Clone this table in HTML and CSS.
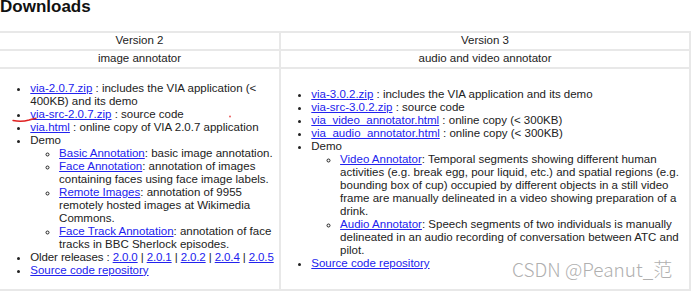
FILE: index.html
```html
<!DOCTYPE html>
<html>
<head>
<meta charset="utf-8">
<link rel="stylesheet" href="styles.css">
</head>
<body>
<div class="page">
  <h2 class="title">Downloads</h2>
  <div class="dl">
    <div class="cell head">Version 2</div>
    <div class="cell head last">Version 3</div>
    <div class="cell head">image annotator</div>
    <div class="cell head last">audio and video annotator</div>
    <div class="cell body">
      <ul>
        <li><a href="#">via-2.0.7.zip</a> : includes the VIA application (&lt; 400KB) and its demo</li>
        <li><a href="#">via-src-2.0.7.zip</a> : source code</li>
        <li><a href="#">via.html</a> : online copy of VIA 2.0.7 application</li>
        <li>Demo
          <ul>
            <li><a href="#">Basic Annotation</a>: basic image annotation.</li>
            <li><a href="#">Face Annotation</a>: annotation of images containing faces using face image labels.</li>
            <li><a href="#">Remote Images</a>: annotation of 9955 remotely hosted images at Wikimedia Commons.</li>
            <li><a href="#">Face Track Annotation</a>: annotation of face tracks in BBC Sherlock episodes.</li>
          </ul>
        </li>
        <li class="releases">Older releases : <a href="#">2.0.0</a> | <a href="#">2.0.1</a> | <a href="#">2.0.2</a> | <a href="#">2.0.4</a> | <a href="#">2.0.5</a></li>
        <li><a href="#">Source code repository</a></li>
      </ul>
    </div>
    <div class="cell body last">
      <ul>
        <li><a href="#">via-3.0.2.zip</a> : includes the VIA application and its demo</li>
        <li><a href="#">via-src-3.0.2.zip</a> : source code</li>
        <li><a href="#">via_video_annotator.html</a> : online copy (&lt; 300KB)</li>
        <li><a href="#">via_audio_annotator.html</a> : online copy (&lt; 300KB)</li>
        <li>Demo
          <ul>
            <li><a href="#">Video Annotator</a>: Temporal segments showing different human activities (e.g. break egg, pour liquid, etc.) and spatial regions (e.g. bounding box of cup) occupied by different objects in a still video frame are manually delineated in a video showing preparation of a drink.</li>
            <li><a href="#">Audio Annotator</a>: Speech segments of two individuals is manually delineated in an audio recording of conversation between ATC and pilot.</li>
          </ul>
        </li>
        <li><a href="#">Source code repository</a></li>
      </ul>
    </div>
  </div>
  <svg class="scribble" width="692" height="291" viewBox="0 0 692 291">
    <path d="M13 120.5 C18 121.5 24 121.5 29 120 C32 119 34 118.5 36 118.2" fill="none" stroke="#e02020" stroke-width="1.4" stroke-linecap="round"/>
    <circle cx="230" cy="116.5" r="0.9" fill="#e85050"/>
  </svg>
  <div class="watermark">CSDN @Peanut_范</div>
</div>
</body>
</html>
```

FILE: styles.css
```css
html, body {
  margin: 0;
  padding: 0;
  background: #ffffff;
}

.page {
  position: relative;
  width: 692px;
  height: 291px;
  overflow: hidden;
  font-family: "Liberation Sans", Arial, sans-serif;
  font-size: 11.5px;
  line-height: 13px;
  color: #222222;
}

.title {
  margin: 0 0 17px 0;
  font-size: 17px;
  line-height: 14px;
  font-weight: bold;
  color: #111111;
}

.dl {
  display: grid;
  grid-template-columns: 281px 408px;
  width: 691px;
  box-sizing: border-box;
  border-top: 2px solid #e8e8e8;
  border-right: 2px solid #e8e8e8;
}

.cell {
  box-sizing: border-box;
  border-bottom: 2px solid #e8e8e8;
  border-right: 2px solid #e8e8e8;
  padding: 1px 1.5px 2px 1.5px;
}

.cell.last {
  border-right: none;
}

.head {
  text-align: center;
}

.body {
  display: flex;
  flex-direction: column;
  justify-content: center;
  padding: 1.5px;
}

ul {
  margin: 11px 0;
  padding-left: 28.8px;
  list-style: disc;
}

ul ul {
  margin: 0;
  list-style: circle;
}

.releases {
  letter-spacing: -0.12px;
  white-space: nowrap;
}

a {
  color: #2222ee;
  text-decoration: underline;
}

.scribble {
  position: absolute;
  left: 0;
  top: 0;
  pointer-events: none;
}

.watermark {
  position: absolute;
  left: 512px;
  top: 259px;
  font-family: "Noto Sans CJK SC", "Noto Sans", sans-serif;
  font-size: 19px;
  line-height: 19px;
  font-weight: 300;
  color: #b0b0b0;
  white-space: nowrap;
}
```
